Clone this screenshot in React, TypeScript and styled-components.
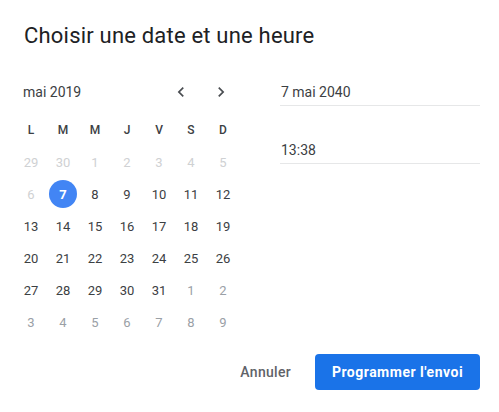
import React from "react";
import styled, { createGlobalStyle } from "styled-components";

const Global = createGlobalStyle`
  html, body { margin: 0; padding: 0; background: #fff; }
  body { font-family: Roboto, "Liberation Sans", Arial, sans-serif; color: #3c4043; }
  * { box-sizing: border-box; }
`;

const Dialog = styled.div`
  width: 499px;
  height: 412px;
  padding: 22px 19px 0 15px;
  display: flex;
  flex-direction: column;
  background: #fff;
`;

const Title = styled.h1`
  margin: 0 0 22px;
  padding-left: 9px;
  font-family: Roboto, "Liberation Sans", Arial, sans-serif;
  font-size: 22px;
  line-height: 28px;
  font-weight: 400;
  letter-spacing: 0.2px;
  color: #202124;
`;

const Body = styled.div`
  display: flex;
  justify-content: space-between;
`;

const Calendar = styled.div`
  width: 224px;
  display: flex;
  flex-direction: column;
`;

const MonthHeader = styled.div`
  height: 40px;
  margin-bottom: 2px;
  display: flex;
  align-items: center;
  padding: 0 6px 0 8px;
`;

const MonthLabel = styled.span`
  flex: 1;
  font-size: 14px;
  color: #3c4043;
`;

const NavGroup = styled.div`
  display: flex;
  gap: 16px;
`;

const NavButton = styled.button`
  width: 24px;
  height: 24px;
  padding: 0;
  border: none;
  background: transparent;
  display: flex;
  align-items: center;
  justify-content: center;
  color: #4a4d51;
  cursor: pointer;
`;

const Grid = styled.div`
  display: grid;
  grid-template-columns: repeat(7, 32px);
  grid-auto-rows: 32px;
`;

const WeekDay = styled.div`
  display: flex;
  align-items: center;
  justify-content: center;
  font-size: 12px;
  font-weight: 500;
  color: #3c4043;
`;

type Kind = "normal" | "disabled" | "outside" | "selected";

const colors: Record<Kind, string> = {
  normal: "#3c4043",
  disabled: "#cfd1d3",
  outside: "#9aa0a6",
  selected: "#fff",
};

const Day = styled.div<{ $kind: Kind }>`
  display: flex;
  align-items: center;
  justify-content: center;
  font-size: 13px;
  color: ${(p) => colors[p.$kind]};
`;

const Selected = styled.span`
  width: 28px;
  height: 28px;
  border-radius: 50%;
  background: #4285f4;
  color: #fff;
  font-weight: 700;
  display: flex;
  align-items: center;
  justify-content: center;
`;

const Fields = styled.div`
  width: 200px;
  padding-top: 8px;
  display: flex;
  flex-direction: column;
  gap: 32px;
`;

const Field = styled.div`
  height: 26px;
  line-height: 25px;
  border-bottom: 1px solid #e6e7e8;
  font-size: 14px;
  color: #3c4043;
  padding-left: 1px;
`;

const Footer = styled.div`
  margin-top: 16px;
  display: flex;
  justify-content: flex-end;
  align-items: center;
`;

const TextButton = styled.button`
  height: 36px;
  padding: 0 16px;
  margin-right: 8px;
  border: none;
  background: transparent;
  font-family: Roboto, "Liberation Sans", Arial, sans-serif;
  font-size: 14px;
  font-weight: 500;
  color: #5f6368;
  letter-spacing: 0.3px;
  cursor: pointer;
`;

const PrimaryButton = styled.button`
  width: 165px;
  height: 36px;
  border: none;
  border-radius: 4px;
  background: #1a73e8;
  color: #fff;
  font-family: Roboto, "Liberation Sans", Arial, sans-serif;
  font-size: 14px;
  font-weight: 700;
  letter-spacing: 0.5px;
  cursor: pointer;
`;

const Chevron = ({ dir }: { dir: "left" | "right" }) => (
  <svg width="20" height="20" viewBox="0 0 24 24" fill="currentColor">
    {dir === "left" ? (
      <path d="M15.41 7.41 14 6l-6 6 6 6 1.41-1.41L10.83 12z" />
    ) : (
      <path d="M8.59 16.59 10 18l6-6-6-6-1.41 1.41L13.17 12z" />
    )}
  </svg>
);

const weekDays = ["L", "M", "M", "J", "V", "S", "D"];

type Cell = { n: number; kind: Kind };

const buildDays = (): Cell[] => {
  const cells: Cell[] = [];
  cells.push({ n: 29, kind: "disabled" }, { n: 30, kind: "disabled" });
  for (let d = 1; d <= 31; d++) {
    let kind: Kind = "normal";
    if (d < 7) kind = "disabled";
    if (d === 7) kind = "selected";
    cells.push({ n: d, kind });
  }
  for (let d = 1; d <= 9; d++) cells.push({ n: d, kind: "outside" });
  return cells;
};

export default function App() {
  const days = buildDays();
  return (
    <>
      <Global />
      <Dialog>
        <Title>Choisir une date et une heure</Title>
        <Body>
          <Calendar>
            <MonthHeader>
              <MonthLabel>mai 2019</MonthLabel>
              <NavGroup>
                <NavButton aria-label="Mois précédent">
                  <Chevron dir="left" />
                </NavButton>
                <NavButton aria-label="Mois suivant">
                  <Chevron dir="right" />
                </NavButton>
              </NavGroup>
            </MonthHeader>
            <Grid>
              {weekDays.map((w, i) => (
                <WeekDay key={"w" + i}>{w}</WeekDay>
              ))}
              {days.map((c, i) => (
                <Day key={i} $kind={c.kind}>
                  {c.kind === "selected" ? <Selected>{c.n}</Selected> : c.n}
                </Day>
              ))}
            </Grid>
          </Calendar>
          <Fields>
            <Field>7 mai 2040</Field>
            <Field>13:38</Field>
          </Fields>
        </Body>
        <Footer>
          <TextButton>Annuler</TextButton>
          <PrimaryButton>Programmer l'envoi</PrimaryButton>
        </Footer>
      </Dialog>
    </>
  );
}
